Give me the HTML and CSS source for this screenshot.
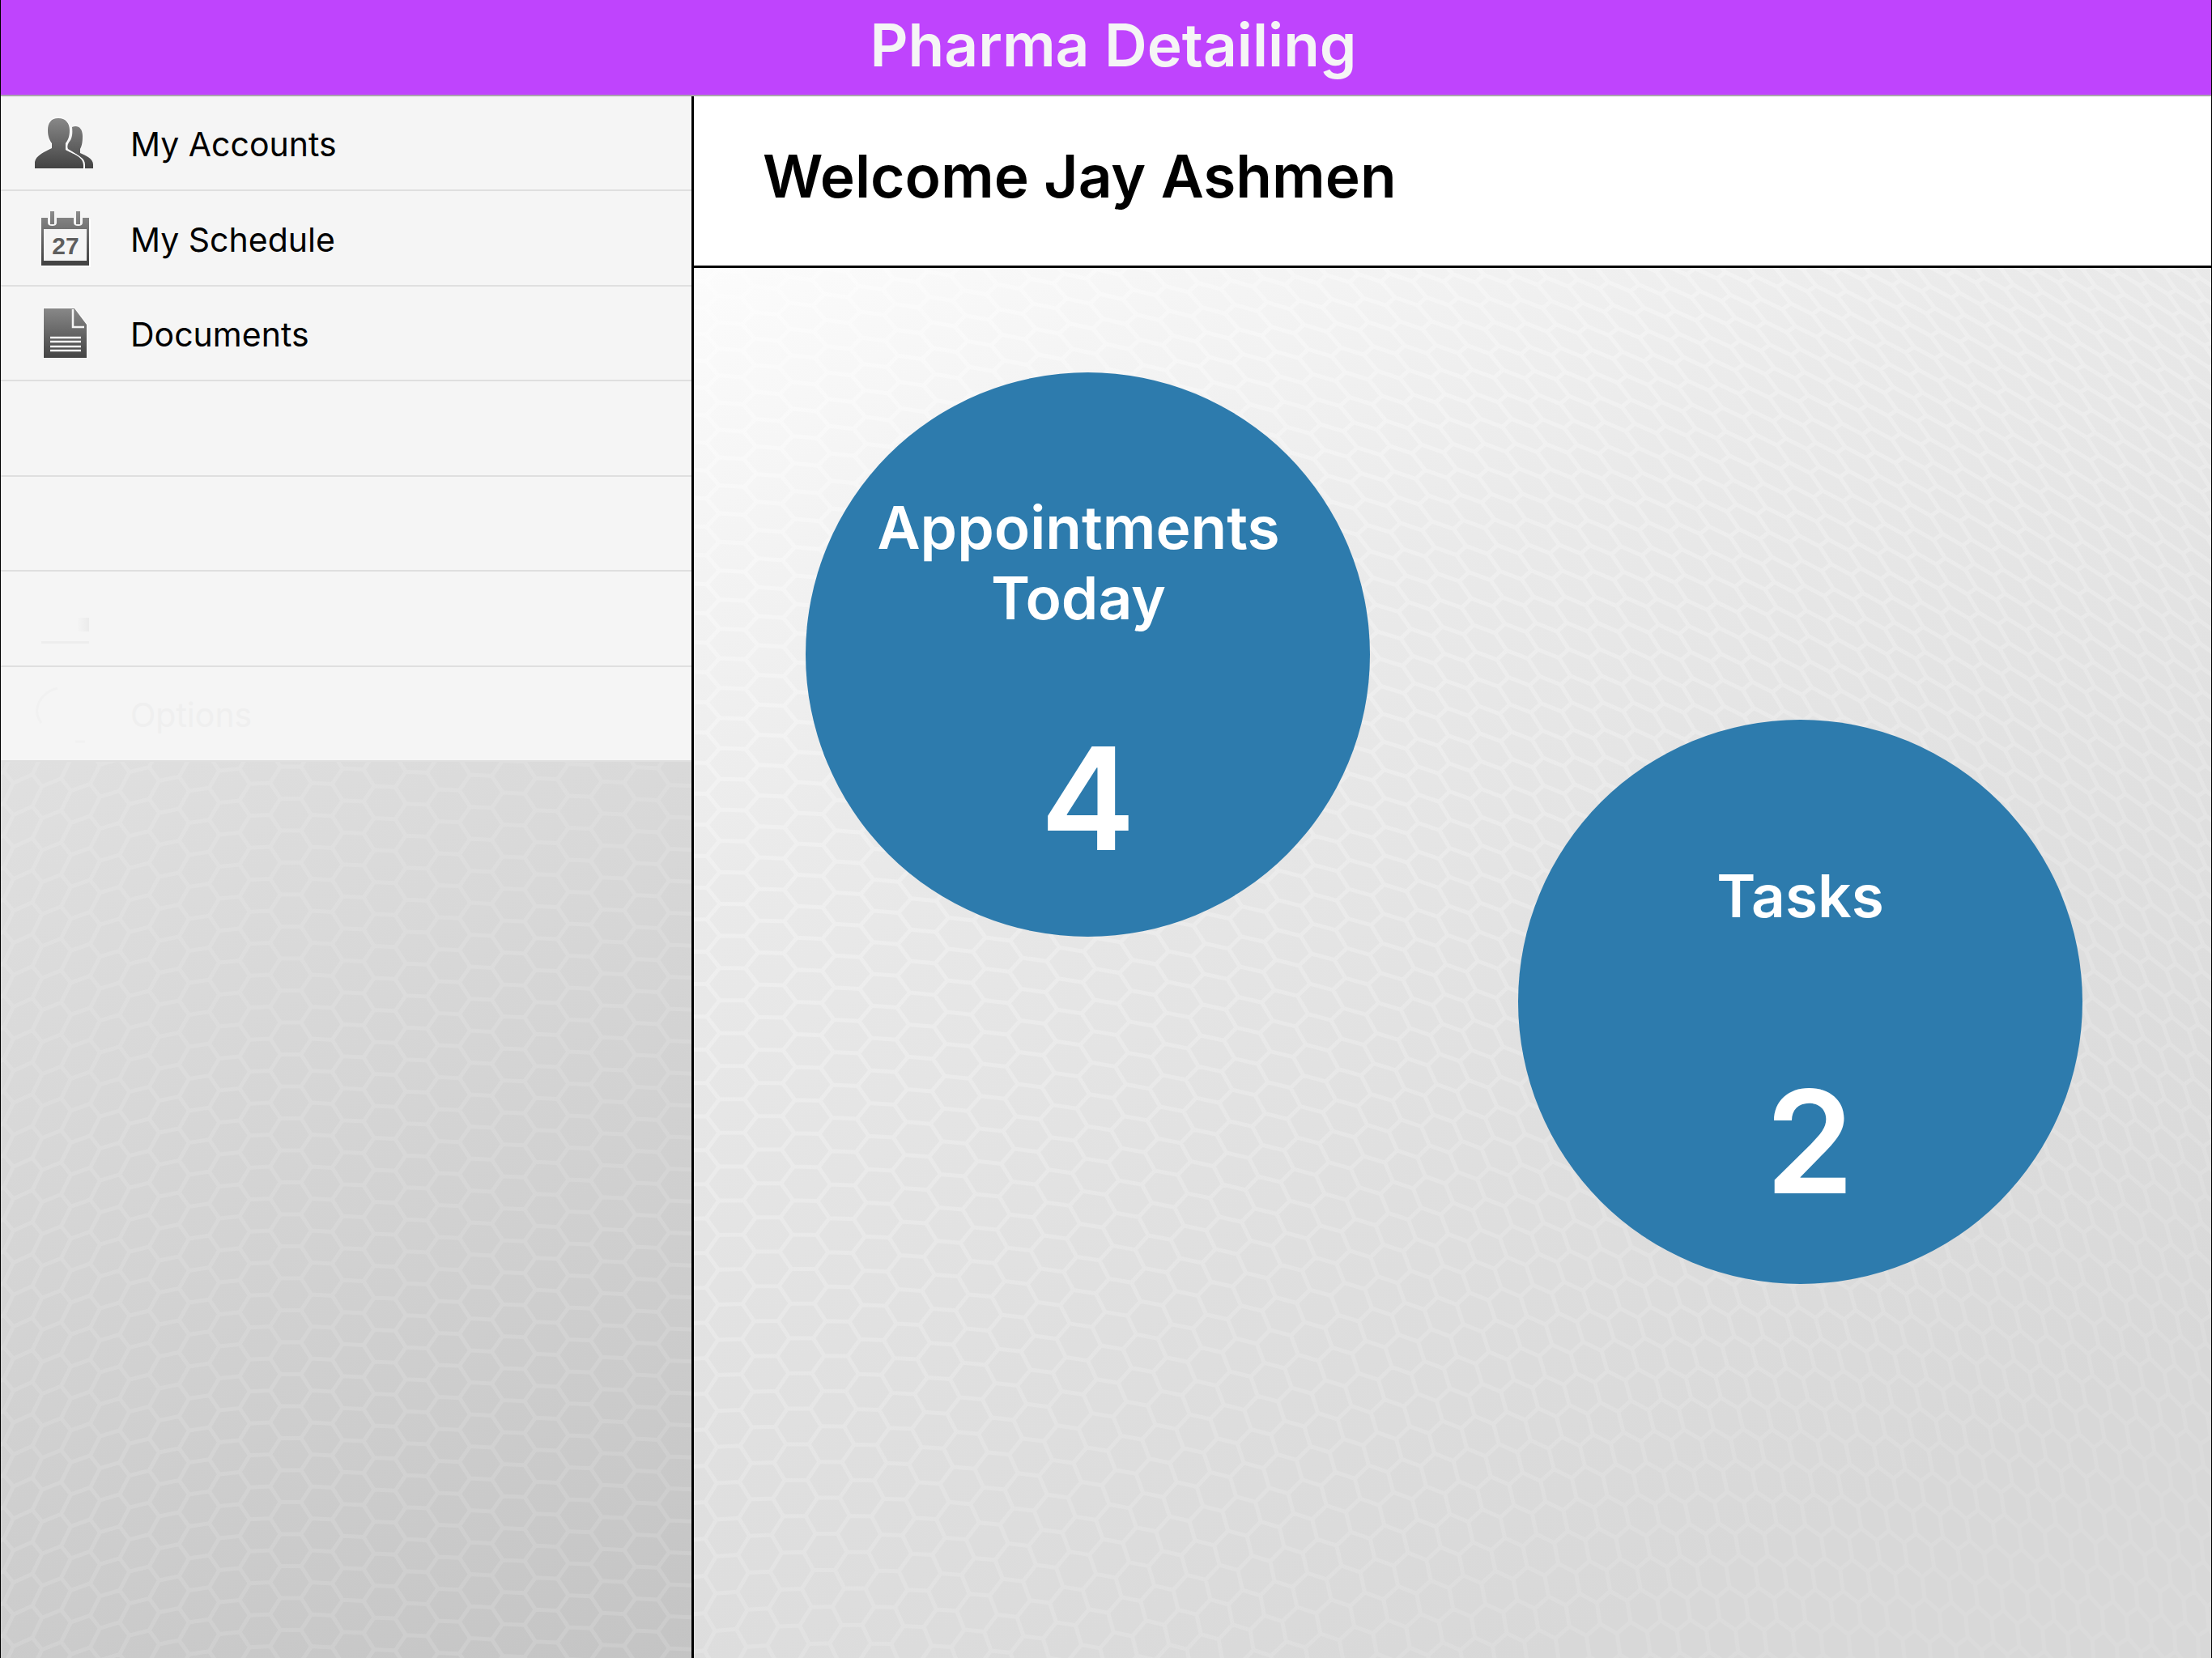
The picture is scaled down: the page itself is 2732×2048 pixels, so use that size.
FILE: index.html
```html
<!DOCTYPE html>
<html lang="en">
<head>
<meta charset="utf-8">
<title>Pharma Detailing</title>
<meta name="viewport" content="width=device-width, initial-scale=1">
<link rel="stylesheet" href="styles.css">
</head>
<body>
<header class="topbar"><h1 class="topbar-title">Pharma Detailing</h1></header>
<div class="layout">
  <nav class="sidebar" aria-label="Main">
    <svg class="mesh" viewBox="0 0 853 1930" preserveAspectRatio="xMinYMax slice" aria-hidden="true"><path data-mesh="sidebar"/></svg>
    <ul class="menu">
      <li class="menu-row"><a class="menu-link" href="#accounts">
        <svg class="icon" viewBox="0 0 78 72" aria-hidden="true">
          <defs><linearGradient id="steel" gradientUnits="userSpaceOnUse" x1="0" y1="2" x2="0" y2="66"><stop offset="0" stop-color="#8a8a8a"/><stop offset="1" stop-color="#434343"/></linearGradient></defs>
          <path fill="url(#steel)" d="M46 15c6-3 13 0 13 11 0 8-1 12-3 16v5c7 3 16 7 16 14v5H62v-5c0-8-9-11-16-16l-5-3c-1-2-1-5 1-8 4-4 5-11 4-19z"/>
          <path fill="url(#steel)" stroke="#fff" stroke-width="2" paint-order="stroke" d="M29 4c9 0 14 6 14 15 0 8-2 12-5 16v8c8 5 22 8 22 19v4H0v-8c1-8 13-13 21-17v-6c-3-4-5-9-5-16C16 10 20 4 29 4z"/>
        </svg><span>My Accounts</span></a></li>
      <li class="menu-row"><a class="menu-link" href="#schedule">
        <svg class="icon" viewBox="0 0 78 72" aria-hidden="true">
          <path fill="none" stroke="#fff" stroke-width="2" d="M8 69h60V11"/>
          <path fill="url(#steel)" fill-rule="evenodd" d="M8 9h8v6q0 4 5.500 4t5.500-4v-6h21v6q0 4 5.500 4t5.500-4v-6h8v59H8zM11 23v39h53V23z"/>
          <path fill="url(#steel)" d="M19 1h5v16h-5zM51 1h5v16h-5z"/>
          <text class="icon-day" x="38" y="54" text-anchor="middle">27</text>
        </svg><span>My Schedule</span></a></li>
      <li class="menu-row"><a class="menu-link" href="#documents">
        <svg class="icon" viewBox="0 0 78 72" aria-hidden="true">
          <path fill="url(#steel)" stroke="#fff" stroke-width="2" paint-order="stroke" d="M11 4h38l15 20v41H11z"/>
          <path fill="none" stroke="#f4f4f4" stroke-width="2.500" d="M47 5v22h14M19 40h38M19 45h38M19 51h38M19 56h38"/>
        </svg><span>Documents</span></a></li>
      <li class="menu-row"></li>
      <li class="menu-row"></li>
      <li class="menu-row"><span class="menu-link">
        <svg class="icon" viewBox="0 0 78 72" aria-hidden="true"><defs><linearGradient id="fade"><stop offset="0" stop-color="#f4f4f4"/><stop offset="1" stop-color="#ebebeb"/></linearGradient></defs><path fill="#ededed" d="M8 63h59v3H8z"/><path fill="url(#fade)" d="M53 34h14v17H53z"/></svg></span></li>
      <li class="menu-row"><a class="menu-link menu-link-off" href="#options">
        <svg class="icon" viewBox="0 0 78 72" aria-hidden="true"><path fill="none" stroke="#f1f1f1" stroke-width="3" d="M28 3C8 8-5 28 8 46M50 69h12"/></svg><span>Options</span></a></li>
    </ul>
  </nav>
  <main class="content">
    <div class="welcome"><h2 class="welcome-text">Welcome Jay Ashmen</h2></div>
    <div class="dashboard">
      <svg class="mesh" viewBox="0 0 1874 1717" preserveAspectRatio="xMinYMin slice" aria-hidden="true">
        <defs><linearGradient id="sheen" gradientUnits="userSpaceOnUse" x1="600" y1="0" x2="1500" y2="1717"><stop offset="0" stop-color="#fff" stop-opacity=".32"/><stop offset=".6" stop-color="#fff" stop-opacity=".17"/><stop offset="1" stop-color="#fff" stop-opacity=".08"/></linearGradient></defs>
        <path data-mesh="content"/></svg>
      <a class="stat stat-appointments" href="#appointments"><span class="stat-label">Appointments Today</span><strong class="stat-value">4</strong></a>
      <a class="stat stat-tasks" href="#tasks"><span class="stat-label">Tasks</span><strong class="stat-value">2</strong></a>
    </div>
  </main>
</div>
<script src="mesh.js"></script>
</body>
</html>
```
FILE: styles.css
```css
*, *::before, *::after { box-sizing: border-box; }

body {
  margin: 0;
  min-height: 100vh;
  display: flex;
  flex-direction: column;
  border: solid #000;
  border-width: 0 1px;
  background: #fff;
  color: #000;
  font-family: Inter, "Liberation Sans", sans-serif;
}

h1, h2, ul { margin: 0; padding: 0; }
a { color: inherit; text-decoration: none; }

.topbar {
  display: flex;
  justify-content: center;
  padding: 12px 0 17px 18px;
  background: #bf44fd;
  border-bottom: 2px solid #aaa2ae;
  color: #f5f5f5;
}

.topbar-title, .welcome-text { font-size: 73px; font-weight: 600; line-height: 88px; }

.layout {
  flex: 1;
  display: grid;
  grid-template-columns: 856fr 1874fr;
}

.sidebar {
  position: relative;
  overflow: hidden;
  border-right: 3px solid #000;
  background: linear-gradient(155deg, #e6e6e6 20%, #d8d8d8 55%, #c4c4c4 100%);
}

.mesh {
  position: absolute;
  inset: 0;
  width: 100%;
  height: 100%;
  fill: none;
  stroke-width: 5;
  stroke-linejoin: round;
}

.sidebar .mesh { stroke: #fff; opacity: .12; }
.dashboard .mesh { stroke: url(#sheen); }

.menu {
  position: relative;
  display: grid;
  grid-auto-rows: 1fr;
  min-height: 822px;
  list-style: none;
  background: #f5f5f5;
}

.menu-row { display: flex; border-bottom: 2px solid #dfdfdf; }

.menu-link {
  flex: 1;
  display: flex;
  align-items: center;
  gap: 40px;
  padding: 3px 0 0 42px;
  font-size: 41px;
  line-height: 52px;
}

.menu-link-off { color: #efefef; }

.icon { width: 78px; height: 72px; flex: none; }
.icon-day { font: bold 30px "Liberation Sans", sans-serif; fill: #5e5e5e; }

.content { display: flex; flex-direction: column; }

.welcome {
  padding: 55px 85px 66px;
  background: #fff;
  border-bottom: 3px solid #000;
}

.dashboard {
  position: relative;
  flex: 1;
  display: flex;
  flex-wrap: wrap;
  justify-content: space-between;
  align-content: flex-start;
  padding: 129px 159px 128px 138px;
  overflow: hidden;
  background: linear-gradient(155deg, #fcfcfc 0%, #eaeaea 30%, #dfdfdf 60%, #d8d8d8 85%);
}

.stat {
  position: relative;
  display: flex;
  flex-direction: column;
  align-items: center;
  justify-content: space-between;
  width: 697px;
  height: 697px;
  border-radius: 50%;
  background: #2d7bad;
  color: #fff;
  text-align: center;
}

.stat-appointments { padding: 148px 70px 83px; }
.stat-tasks { margin-top: 429px; padding: 174px 70px 88px; }

.stat-label { font-size: 73px; font-weight: 600; line-height: 87px; }
.stat-appointments .stat-label { padding-right: 23px; }

.stat-value { font-size: 176px; font-weight: 600; line-height: 176px; }
.stat-tasks .stat-value { padding-left: 23px; }
```
FILE: mesh.js
```js
// Draws the honeycomb backdrops. Each surface bends a flat hexagon lattice
// (a = column, b = row) onto its panel.
const surfaces = {
  sidebar: {
    cols: [-2, 26], rows: [-4, 60],
    bend(a, b) {
      const x = 35 * a + 0.16 * a * a;
      const lean = Math.max(0, 400 - x) / 400;
      return [x - 8, b * 39.5 + 0.05 * x + lean * lean * 110];
    }
  },
  content: {
    cols: [-8, 70], rows: [-50, 70],
    bend(a, b) {
      const x = 44 * a - 0.12 * a * a;
      const flat = b * (41 - 8 * x / 1874) + 0.1 * x + 0.0002 * x * x;
      const y = flat > 0 ? flat * 0.78 + flat * flat * 0.0001 : flat * 0.78;
      const pull = Math.max(0, Math.min(1, x / 800));
      return [x + pull * (0.22 * y - 0.00016 * y * y), y];
    }
  }
};

const corners = [[-2 / 3, 0], [-1 / 3, -0.5], [1 / 3, -0.5], [2 / 3, 0]];

for (const path of document.querySelectorAll("[data-mesh]")) {
  const { cols, rows, bend } = surfaces[path.dataset.mesh];
  let d = "";
  for (let i = cols[0]; i < cols[1]; i++) {
    for (let j = rows[0]; j < rows[1]; j++) {
      const shift = i % 2 ? 0.5 : 0;
      d += "M" + corners.map(([u, v]) => bend(i + u, j + shift + v).map(n => n.toFixed(1)).join(" ")).join("L");
    }
  }
  path.setAttribute("d", d);
}
```
